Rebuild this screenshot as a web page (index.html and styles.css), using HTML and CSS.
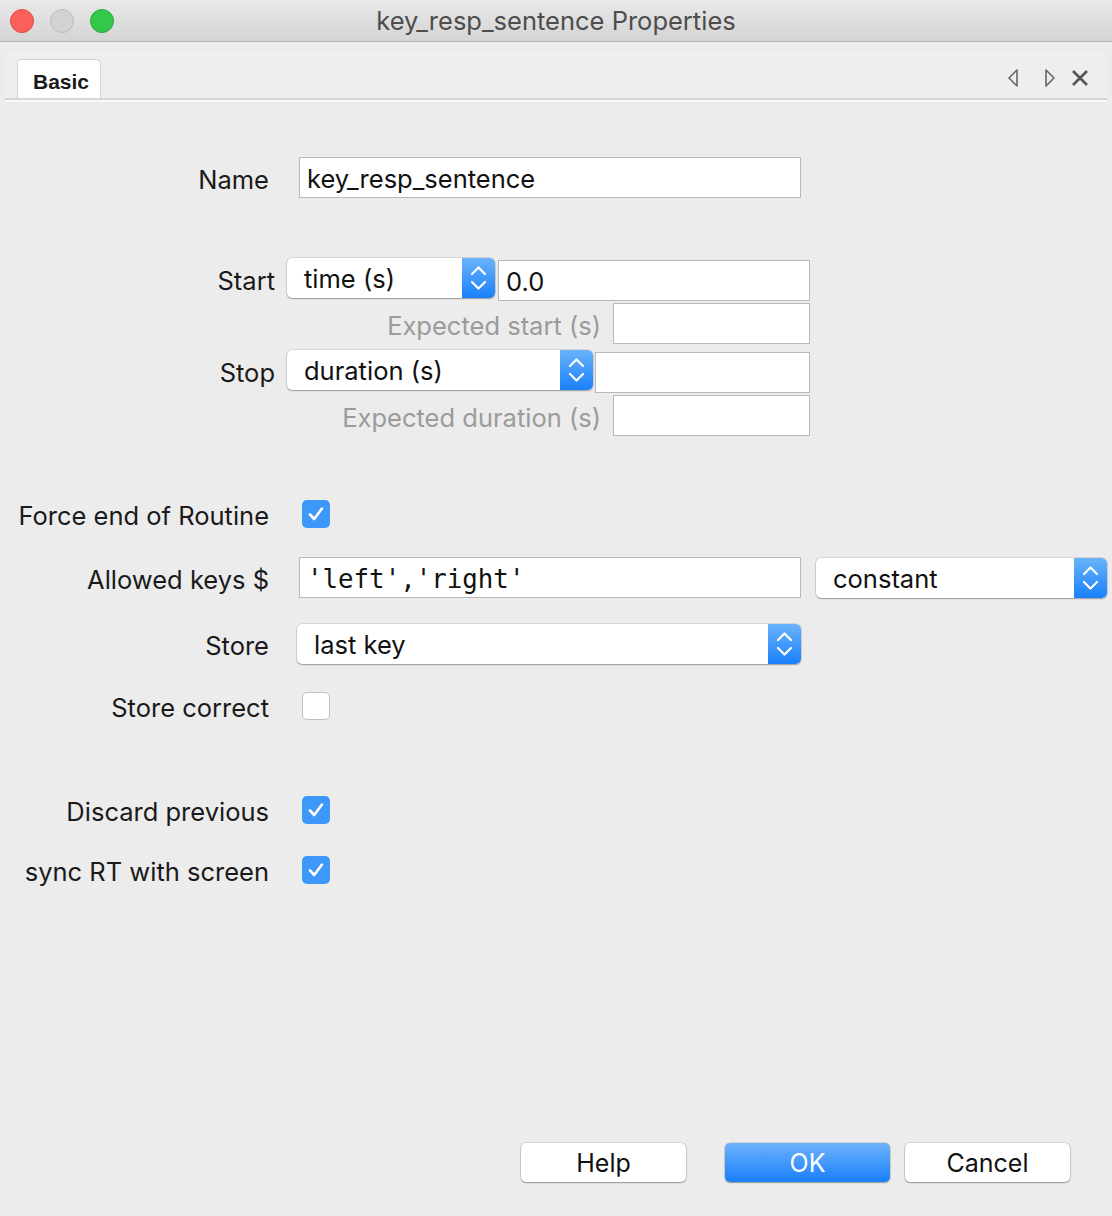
FILE: index.html
```html
<!DOCTYPE html>
<html>
<head>
<meta charset="utf-8">
<link rel="stylesheet" href="styles.css">
</head>
<body>
<div class="window">
  <header class="titlebar">
    <div class="lights">
      <span class="light red"></span>
      <span class="light gray"></span>
      <span class="light green"></span>
    </div>
    <div class="title">key_resp_sentence Properties</div>
    <div></div>
  </header>

  <div class="tabbar">
    <div class="tab">Basic</div>
    <div class="tabtools">
      <svg class="tool t-prev" width="12" height="20" viewBox="0 0 12 20"><path d="M10 2 L2 10 L10 18 Z" fill="none" stroke="#666" stroke-width="1.6" stroke-linejoin="round"/></svg>
      <svg class="tool t-next" width="12" height="20" viewBox="0 0 12 20"><path d="M2 2 L10 10 L2 18 Z" fill="none" stroke="#666" stroke-width="1.6" stroke-linejoin="round"/></svg>
      <svg class="tool t-close" width="18" height="18" viewBox="0 0 18 18"><path d="M2 2 L16 16 M16 2 L2 16" fill="none" stroke="#555" stroke-width="2.6"/></svg>
    </div>
  </div>

  <main class="form">
    <div class="row r-name">
      <label class="lab w269">Name</label>
      <div class="field f-name">key_resp_sentence</div>
    </div>

    <div class="row r-start">
      <label class="lab w275">Start</label>
      <div class="select s-time"><span class="stext">time (s)</span><span class="stepper"><svg width="33" height="40" viewBox="0 0 33 40"><path d="M10 16 L16.5 9.5 L23 16 M10 24 L16.5 30.5 L23 24" fill="none" stroke="#fff" stroke-width="2.2" stroke-linecap="round" stroke-linejoin="round"/></svg></span></div>
      <div class="field f-start">0.0</div>
    </div>

    <div class="row r-exp1">
      <label class="lab w601 dim">Expected start (s)</label>
      <div class="field f-exp"></div>
    </div>

    <div class="row r-stop">
      <label class="lab w275">Stop</label>
      <div class="select s-dur"><span class="stext">duration (s)</span><span class="stepper"><svg width="33" height="40" viewBox="0 0 33 40"><path d="M10 16 L16.5 9.5 L23 16 M10 24 L16.5 30.5 L23 24" fill="none" stroke="#fff" stroke-width="2.2" stroke-linecap="round" stroke-linejoin="round"/></svg></span></div>
      <div class="field f-stop"></div>
    </div>

    <div class="row r-exp2">
      <label class="lab w601 dim">Expected duration (s)</label>
      <div class="field f-exp"></div>
    </div>

    <div class="row r-force">
      <label class="lab w269">Force end of Routine</label>
      <span class="check on"><svg width="28" height="28" viewBox="0 0 28 28"><path d="M8 14.5 L12.2 19 L20 8.5" fill="none" stroke="#fff" stroke-width="2.6" stroke-linecap="round" stroke-linejoin="round"/></svg></span>
    </div>

    <div class="row r-keys">
      <label class="lab w269">Allowed keys $</label>
      <div class="field f-keys mono">'left','right'</div>
      <div class="select s-const"><span class="stext">constant</span><span class="stepper"><svg width="33" height="40" viewBox="0 0 33 40"><path d="M10 16 L16.5 9.5 L23 16 M10 24 L16.5 30.5 L23 24" fill="none" stroke="#fff" stroke-width="2.2" stroke-linecap="round" stroke-linejoin="round"/></svg></span></div>
    </div>

    <div class="row r-store">
      <label class="lab w269">Store</label>
      <div class="select s-store"><span class="stext">last key</span><span class="stepper"><svg width="33" height="40" viewBox="0 0 33 40"><path d="M10 16 L16.5 9.5 L23 16 M10 24 L16.5 30.5 L23 24" fill="none" stroke="#fff" stroke-width="2.2" stroke-linecap="round" stroke-linejoin="round"/></svg></span></div>
    </div>

    <div class="row r-correct">
      <label class="lab w269">Store correct</label>
      <span class="check"></span>
    </div>

    <div class="row r-discard">
      <label class="lab w269">Discard previous</label>
      <span class="check on"><svg width="28" height="28" viewBox="0 0 28 28"><path d="M8 14.5 L12.2 19 L20 8.5" fill="none" stroke="#fff" stroke-width="2.6" stroke-linecap="round" stroke-linejoin="round"/></svg></span>
    </div>

    <div class="row r-sync">
      <label class="lab w269">sync RT with screen</label>
      <span class="check on"><svg width="28" height="28" viewBox="0 0 28 28"><path d="M8 14.5 L12.2 19 L20 8.5" fill="none" stroke="#fff" stroke-width="2.6" stroke-linecap="round" stroke-linejoin="round"/></svg></span>
    </div>
  </main>

  <footer class="buttons">
    <button class="btn b-help">Help</button>
    <button class="btn primary b-ok">OK</button>
    <button class="btn b-cancel">Cancel</button>
  </footer>
</div>
</body>
</html>
```

FILE: styles.css
```css
* { box-sizing: border-box; }
html, body { margin: 0; padding: 0; }
body {
  width: 1112px;
  height: 1216px;
  background: #ececec;
  font-family: "Inter", "Helvetica Neue", "Liberation Sans", sans-serif;
  color: #1a1a1a;
  overflow: hidden;
}
.window {
  height: 1216px;
  display: flex;
  flex-direction: column;
}

/* title bar */
.titlebar {
  height: 42px;
  flex: none;
  display: grid;
  grid-template-columns: 1fr auto 1fr;
  align-items: center;
  background: linear-gradient(#e9e9e9, #d4d4d4);
  border-bottom: 1px solid #b4b4b4;
}
.lights {
  display: flex;
  gap: 16px;
  padding-left: 10px;
}
.light {
  width: 24px;
  height: 24px;
  border-radius: 50%;
  display: block;
}
.light.red { background: #fc605b; border: 1px solid #de4a44; }
.light.gray { background: #d3d3d3; border: 1px solid #bcbcbc; }
.light.green { background: #34c84a; border: 1px solid #28a83b; }
.title {
  font-size: 25.5px;
  color: #4d4d4d;
}

/* tab bar */
.tabbar {
  flex: none;
  margin: 10px 5px 0 5px;
  height: 48px;
  background: #eeeeee;
  border-bottom: 2px solid #d6d6d6;
  display: flex;
  align-items: flex-end;
  justify-content: space-between;
  position: relative;
}
.tabbar::after {
  content: "";
  position: absolute;
  left: 0; right: 0;
  bottom: -4px;
  height: 2px;
  background: #f8f8f8;
}
.tab {
  margin-left: 12px;
  width: 84px;
  height: 39px;
  background: #fff;
  border: 1px solid #d4d4d4;
  border-bottom: none;
  border-radius: 5px 5px 0 0;
  font-weight: 700;
  font-size: 21px;
  color: #1a1a1a;
  padding: 10px 0 0 15px;
  font-family: "Liberation Sans", "Helvetica", sans-serif;
}
.tabtools {
  display: flex;
  align-items: center;
  padding-right: 18px;
  height: 100%;
  padding-top: 6px;
}
.tool { display: block; }
.t-prev { margin-right: 25px; }
.t-next { margin-right: 15px; }

/* form */
.form {
  flex: none;
  display: flex;
  flex-direction: column;
  font-size: 25.5px;
}
.row {
  display: flex;
  align-items: center;
}
.lab {
  text-align: right;
  flex: none;
  white-space: nowrap;
  height: 28px;
  line-height: 24px;
  padding-top: 4px;
}
.lab.dim { color: #9b9b9b; }
.w269 { width: 269px; margin-right: 30px; }
.w275 { width: 275px; margin-right: 12px; }
.w601 { width: 601px; margin-right: 12px; }

.field {
  flex: none;
  height: 41px;
  background: #fff;
  border: 1px solid #b9b9b9;
  padding-left: 7px;
  padding-top: 3px;
  line-height: 36px;
  white-space: nowrap;
  color: #111;
}
.mono {
  font-family: "DejaVu Sans Mono", "Liberation Mono", monospace;
  font-size: 25.8px;
  padding-left: 7px;
}

.select {
  flex: none;
  height: 40px;
  background: #fff;
  border-radius: 5px;
  box-shadow: 0 0 0 0.5px rgba(0,0,0,0.18), 0 1px 1.5px rgba(0,0,0,0.28);
  display: flex;
  align-items: center;
  justify-content: space-between;
  overflow: hidden;
}
.stext { padding-left: 17px; padding-top: 1px; color: #111; white-space: nowrap; }
.stepper {
  width: 33px;
  height: 40px;
  flex: none;
  background: linear-gradient(#6ab3fb, #1a80fb);
  border-radius: 0 5px 5px 0;
}
.stepper svg { display: block; }

.check {
  flex: none;
  width: 28px;
  height: 28px;
  border-radius: 5px;
  background: #fff;
  border: 1px solid #c0c0c0;
  margin-left: 3px;
  display: block;
}
.check.on {
  background: #3d98f9;
  border: none;
}
.check svg { display: block; }

.r-name { margin-top: 57px; }
.f-name { width: 502px; }

.r-start { margin-top: 60px; height: 42px; }
.s-time { width: 208px; margin-bottom: 2px; }
.f-start { width: 312px; margin-left: 3px; margin-top: 2px; }

.r-exp1 { margin-top: 3px; }
.f-exp { width: 197px; }

.r-stop { margin-top: 6px; height: 42px; }
.s-dur { width: 306px; margin-bottom: 2px; }
.f-stop { width: 215px; margin-left: 2px; margin-top: 2px; }

.r-exp2 { margin-top: 3px; }

.r-force { margin-top: 64px; }

.r-keys { margin-top: 29px; }
.f-keys { width: 502px; }
.s-const { width: 291px; margin-left: 15px; }

.r-store { margin-top: 26px; }
.s-store { width: 504px; margin-left: -2px; }

.r-correct { margin-top: 28px; }
.r-discard { margin-top: 76px; }
.r-sync { margin-top: 32px; }

/* buttons */
.buttons {
  margin-top: auto;
  padding: 0 42px 34px 0;
  display: flex;
  justify-content: flex-end;
}
.btn {
  width: 165px;
  height: 39px;
  font-family: "Inter", "Helvetica Neue", "Liberation Sans", sans-serif;
  font-size: 25px;
  color: #111;
  background: #fff;
  border: none;
  border-radius: 5px;
  box-shadow: 0 0 0 0.5px rgba(0,0,0,0.2), 0 1px 1.5px rgba(0,0,0,0.3);
  padding: 0;
}
.b-ok { margin-left: 39px; }
.b-cancel { margin-left: 15px; }
.btn.primary {
  background: linear-gradient(#6cb2fa, #1a7ffb);
  color: #fff;
}
```
